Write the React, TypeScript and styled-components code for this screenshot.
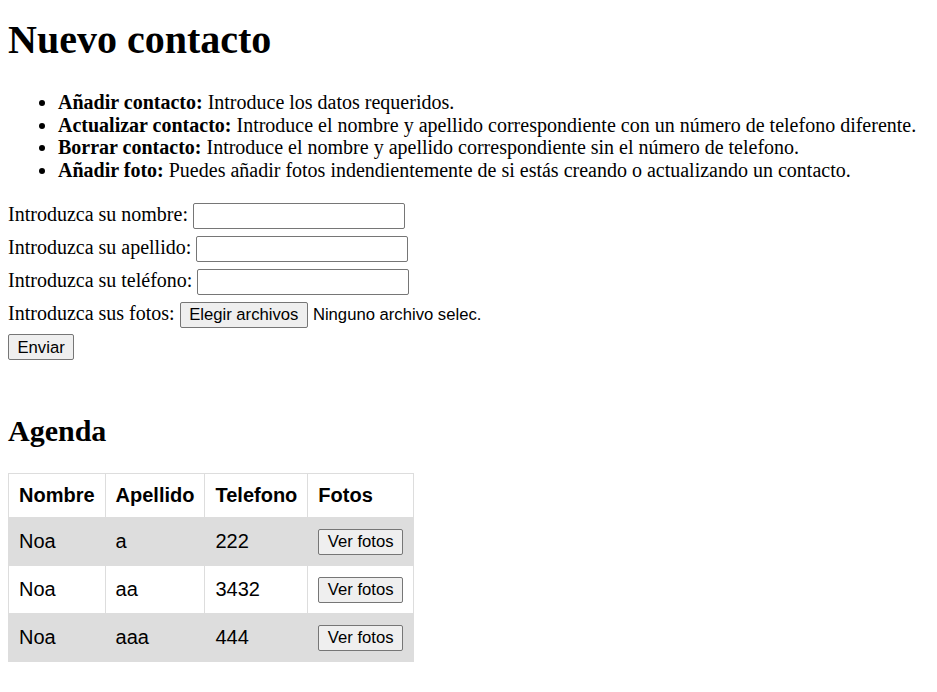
import React from "react";
import styled, { createGlobalStyle } from "styled-components";

const GlobalStyle = createGlobalStyle`
  html, body { margin: 0; padding: 0; background: #ffffff; }
  body {
    font-family: "Liberation Serif", "Times New Roman", serif;
    font-size: 20px;
    color: #000000;
  }
`;

const Page = styled.div`
  padding: 0 8px 24px;
`;

const Title = styled.h1`
  margin: 16.5px 0 0;
  font-size: 40px;
  line-height: 46px;
  font-weight: bold;
`;

const Instructions = styled.ul`
  margin: 28.5px 0 0;
  padding-left: 50px;
  list-style: disc;
`;

const Item = styled.li`
  line-height: 22.7px;
  white-space: nowrap;
`;

const Form = styled.form`
  margin-top: 21.5px;
  display: flex;
  flex-direction: column;
  align-items: flex-start;
  gap: 6.75px;
`;

const Row = styled.div`
  display: flex;
  align-items: baseline;
  gap: 5px;
`;

const Label = styled.label`
  line-height: 23px;
  white-space: nowrap;
`;

const TextInput = styled.input`
  box-sizing: border-box;
  width: 212px;
  height: 26px;
  margin: 0;
  padding: 1px 3px;
  border: 1px solid #767676;
  border-radius: 2px;
  background: #ffffff;
  font-family: "Liberation Sans", Arial, sans-serif;
  font-size: 16.67px;
`;

const Button = styled.button`
  box-sizing: border-box;
  height: 26px;
  margin: 0;
  padding: 0 8.5px;
  border: 1px solid #767676;
  border-radius: 2px;
  background: #efefef;
  color: #000000;
  font-family: "Liberation Sans", Arial, sans-serif;
  font-size: 16.67px;
  line-height: 19px;
  white-space: nowrap;
  cursor: default;
`;

const FileStatus = styled.span`
  font-family: "Liberation Sans", Arial, sans-serif;
  font-size: 16.67px;
  white-space: nowrap;
`;

const Subtitle = styled.h2`
  margin: 53.3px 0 24.9px;
  font-size: 30px;
  line-height: 34.5px;
  font-weight: bold;
`;

const Table = styled.table`
  border-collapse: collapse;
  font-family: "Liberation Sans", Arial, sans-serif;
  font-size: 20px;
`;

const HeadCell = styled.th`
  border: 1px solid #dddddd;
  padding: 10px;
  text-align: left;
  font-weight: bold;
  line-height: 23px;
  white-space: nowrap;
`;

const BodyRow = styled.tr<{ $shaded: boolean }>`
  background: ${(p) => (p.$shaded ? "#dddddd" : "#ffffff")};
`;

const Cell = styled.td`
  border: 1px solid #dddddd;
  padding: 10px;
  text-align: left;
  line-height: 23px;
  height: 27px;
  white-space: nowrap;
`;

const contacts = [
  { nombre: "Noa", apellido: "a", telefono: "222" },
  { nombre: "Noa", apellido: "aa", telefono: "3432" },
  { nombre: "Noa", apellido: "aaa", telefono: "444" },
];

export default function App() {
  return (
    <Page>
      <GlobalStyle />
      <Title>Nuevo contacto</Title>
      <Instructions>
        <Item>
          <b>Añadir contacto:</b> Introduce los datos requeridos.
        </Item>
        <Item>
          <b>Actualizar contacto:</b> Introduce el nombre y apellido correspondiente con un número de telefono diferente.
        </Item>
        <Item>
          <b>Borrar contacto:</b> Introduce el nombre y apellido correspondiente sin el número de telefono.
        </Item>
        <Item>
          <b>Añadir foto:</b> Puedes añadir fotos indendientemente de si estás creando o actualizando un contacto.
        </Item>
      </Instructions>
      <Form onSubmit={(e) => e.preventDefault()}>
        <Row>
          <Label htmlFor="nombre">Introduzca su nombre:</Label>
          <TextInput id="nombre" type="text" />
        </Row>
        <Row>
          <Label htmlFor="apellido">Introduzca su apellido:</Label>
          <TextInput id="apellido" type="text" />
        </Row>
        <Row>
          <Label htmlFor="telefono">Introduzca su teléfono:</Label>
          <TextInput id="telefono" type="text" />
        </Row>
        <Row>
          <Label>Introduzca sus fotos:</Label>
          <Button type="button">Elegir archivos</Button>
          <FileStatus>Ninguno archivo selec.</FileStatus>
        </Row>
        <Row>
          <Button type="submit">Enviar</Button>
        </Row>
      </Form>
      <Subtitle>Agenda</Subtitle>
      <Table>
        <thead>
          <tr>
            <HeadCell>Nombre</HeadCell>
            <HeadCell>Apellido</HeadCell>
            <HeadCell>Telefono</HeadCell>
            <HeadCell>Fotos</HeadCell>
          </tr>
        </thead>
        <tbody>
          {contacts.map((c, i) => (
            <BodyRow key={i} $shaded={i % 2 === 0}>
              <Cell>{c.nombre}</Cell>
              <Cell>{c.apellido}</Cell>
              <Cell>{c.telefono}</Cell>
              <Cell>
                <Button type="button">Ver fotos</Button>
              </Cell>
            </BodyRow>
          ))}
        </tbody>
      </Table>
    </Page>
  );
}
